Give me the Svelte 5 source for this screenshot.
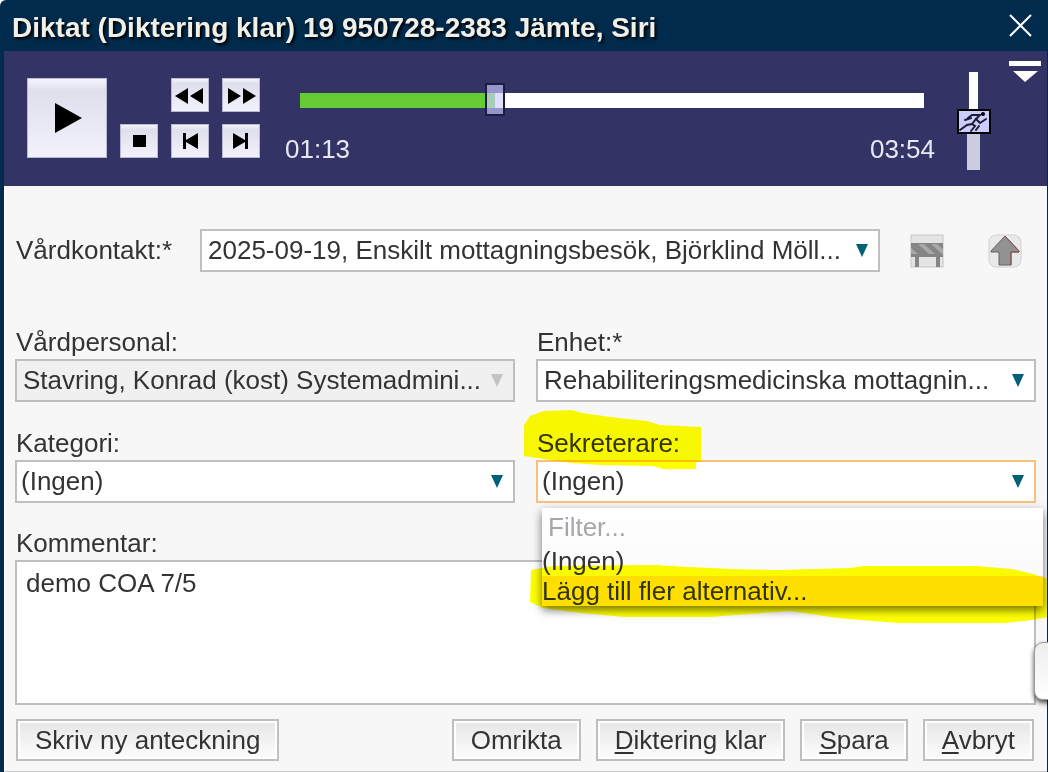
<!-- DictationDialog -->
<script>
  let position = 73;
  let duration = 234;
  let speed = 50;
  let comment = 'demo COA 7/5';
  let filter = '';
  let secretary = '(Ingen)';

  const secretaries = ['(Ingen)', 'Lägg till fler alternativ...'];

  $: progress = (position / duration) * 100;

  function formatTime(seconds) {
    const m = String(Math.floor(seconds / 60)).padStart(2, '0');
    const s = String(seconds % 60).padStart(2, '0');
    return `${m}:${s}`;
  }
</script>

<div class="dialog">
  <header class="titlebar">
    <h1>Diktat (Diktering klar) 19 950728-2383 Jämte, Siri</h1>
    <button class="plain" aria-label="Stäng">
      <svg width="24" height="24" viewBox="0 0 24 24"><path d="M1 1 L22 22 M22 1 L1 22" stroke="#fff" stroke-width="2" /></svg>
    </button>
  </header>

  <section class="player">
    <button class="key play" aria-label="Spela">
      <svg width="78" height="78" viewBox="0 0 78 78"><path d="M27 24 L54 39 L27 54 Z" /></svg>
    </button>
    <div class="keys">
      <button class="key stop" aria-label="Stopp">
        <svg width="36" height="32" viewBox="0 0 36 32"><path d="M12 10 H25 V22 H12 Z" /></svg>
      </button>
      <button class="key rewind" aria-label="Spola bakåt">
        <svg width="36" height="32" viewBox="0 0 36 32"><path d="M3 17 L16 9 V25 Z M18 17 L31 9 V25 Z" /></svg>
      </button>
      <button class="key forward" aria-label="Spola framåt">
        <svg width="36" height="32" viewBox="0 0 36 32"><path d="M5 9 L18 17 L5 25 Z M20 9 L33 17 L20 25 Z" /></svg>
      </button>
      <button class="key first" aria-label="Till början">
        <svg width="36" height="32" viewBox="0 0 36 32"><path d="M11 8 H14 V15 L26 8 V24 L14 17 V24 H11 Z" /></svg>
      </button>
      <button class="key last" aria-label="Till slutet">
        <svg width="36" height="32" viewBox="0 0 36 32"><path d="M10 8 L22 15 V8 H25 V24 H22 V17 L10 24 Z" /></svg>
      </button>
    </div>

    <div class="timeline">
      <div class="track">
        <div class="played" style="width: {progress}%"></div>
        <input type="range" min="0" max={duration} bind:value={position} aria-label="Position" />
      </div>
      <div class="times">
        <span>{formatTime(position)}</span>
        <span>{formatTime(duration)}</span>
      </div>
    </div>

    <div class="speed">
      <svg width="34" height="98" viewBox="0 0 34 98">
        <rect x="12" y="0" width="9" height="40" fill="#fff" />
        <rect x="10" y="60" width="13" height="38" fill="#cccce0" />
        <rect x="1" y="38" width="32" height="23" fill="#ccccff" stroke="#000" stroke-width="2" />
        <g fill="none" stroke="#1d1d30" stroke-width="2" stroke-linecap="round">
          <path d="M3 58 L10 53 L15 52 L19 47 L23 43 L15 43 L11 46" />
          <path d="M8 48 L14 46 M19 47 L23 51 L29 47 M15 52 L18 54 L14 59" />
          <path d="M22 54 L19 58" />
        </g>
        <circle cx="26" cy="42" r="2" />
      </svg>
      <input type="range" min="0" max="100" bind:value={speed} aria-label="Hastighet" />
    </div>

    <button class="plain collapse" aria-label="Fäll ihop">
      <svg width="32" height="22" viewBox="0 0 32 22"><path d="M0 0 H32 V5 H0 Z M4 10 H29 L16 21 Z" fill="#fff" /></svg>
    </button>
  </section>

  <form class="body" on:submit|preventDefault>
    <div class="contact">
      <label for="contact">Vårdkontakt:*</label>
      <div class="select indent">
        <select id="contact"><option>2025-09-19, Enskilt mottagningsbesök, Björklind Möll...</option></select>
      </div>
      <button type="button" class="plain barrier" aria-label="Spärr">
        <svg width="34" height="34" viewBox="0 0 34 34">
          <rect x="1" y="1" width="32" height="32" fill="#e3e4e5" stroke="#c6c6c6" />
          <path d="M5 23 H9 V33 H5 Z M26 23 H30 V33 H26 Z" fill="#858585" />
          <rect x="1" y="9" width="32" height="14" fill="#858585" />
          <path d="M8 10 H14 L25 20 H19 Z M21 10 H27 L33 15 V20 H32 Z M1 14 L8 20 H2 L1 19 Z" fill="#a8a8a8" />
        </svg>
      </button>
      <button type="button" class="plain" aria-label="Hämta">
        <svg width="34" height="34" viewBox="0 0 34 34">
          <rect x="1" y="1" width="32" height="32" rx="7" fill="#e9e9e9" stroke="#d2d2d2" />
          <path d="M17 2 L31 17 V18 H23 V31 H11 V18 H3 V17 Z" fill="#929292" stroke="#6c6060" />
          <path d="M17 2 L31 17 V18 H23 V31" fill="none" stroke="#8c4a50" />
        </svg>
      </button>
    </div>

    <div class="grid">
      <div class="field">
        <label for="staff">Vårdpersonal:</label>
        <div class="select indent disabled">
          <select id="staff" disabled><option>Stavring, Konrad (kost) Systemadmini...</option></select>
        </div>
      </div>
      <div class="field">
        <label for="unit">Enhet:*</label>
        <div class="select indent">
          <select id="unit"><option>Rehabiliteringsmedicinska mottagnin...</option></select>
        </div>
      </div>
      <div class="field">
        <label for="category">Kategori:</label>
        <div class="select">
          <select id="category"><option>(Ingen)</option></select>
        </div>
      </div>
      <div class="field">
        <label for="secretary">Sekreterare:</label>
        <div class="select open">
          <select id="secretary" bind:value={secretary}>
            {#each secretaries as name}
              <option>{name}</option>
            {/each}
          </select>
        </div>
        <div class="popup">
          <input type="text" placeholder="Filter..." aria-label="Filter" bind:value={filter} />
          {#each secretaries as name, i}
            <button type="button" class:active={i === 1} on:click={() => (secretary = name)}>{name}</button>
          {/each}
        </div>
        <svg class="marker" width="526" height="216" viewBox="0 0 526 216" aria-hidden="true">
          <path d="M2 17 L8 8 L22 3 L50 2 L60 5 L96 10 L125 13 L138 17 L179 19 V54 H174 V61 H141 L131 58 L78 57 L50 55 L28 52 L2 48 Z" />
          <path d="M9 162 L31 158 L131 157 L166 159 L210 161 L258 162 L328 160 L342 158 L455 158 L490 161 L511 166 L526 171 V209 L510 212 L483 215 L376 215 L338 212 L316 210 L268 203 L213 207 L189 209 L103 209 L58 205 L21 200 L8 194 Z" />
        </svg>
      </div>
    </div>

    <div class="field comment">
      <label for="comment">Kommentar:</label>
      <textarea id="comment" bind:value={comment}></textarea>
    </div>

    <div class="actions">
      <button type="button">Skriv ny anteckning</button>
      <span class="spacer"></span>
      <button type="button">Omrikta</button>
      <button type="button"><u>D</u>iktering klar</button>
      <button type="button"><u>S</u>para</button>
      <button type="button"><u>A</u>vbryt</button>
    </div>
  </form>

  <div class="tab"></div>
</div>

<style>
  :global(body) {
    background: #fff;
    overflow: hidden;
  }

  .dialog,
  .dialog :is(button, input, select, textarea) {
    font-family: 'Liberation Sans', Arial, sans-serif;
    font-size: 26px;
    color: #333;
    box-sizing: border-box;
  }

  .dialog {
    position: relative;
    overflow: hidden;
    background: #002b4d;
    border-top-left-radius: 6px;
    padding: 0 1px 0 4px;
  }

  svg {
    display: block;
  }

  .plain {
    border: 0;
    padding: 0;
    background: none;
  }

  .titlebar {
    display: flex;
    align-items: center;
    justify-content: space-between;
    height: 51px;
    padding: 0 14px 0 8px;
  }

  h1 {
    margin: 4px 0 0;
    font-size: 28px;
    line-height: 32px;
    font-weight: bold;
    white-space: nowrap;
    color: #f0f0e8;
    text-shadow: 2px 2px 3px #000;
  }

  .player {
    display: flex;
    align-items: flex-start;
    height: 135px;
    box-sizing: border-box;
    padding: 21px 6px 0 23px;
    background: #333366;
  }

  .key {
    padding: 0;
    border: 1px solid #b9b9d2;
    background: linear-gradient(#f4f4fc, #dfdfec 15%, #f2f2fb);
  }

  .play {
    margin-top: 6px;
  }

  .keys {
    display: grid;
    grid-template-columns: repeat(3, 38px);
    gap: 12px 13px;
    margin: 6px 0 0 13px;
  }

  .stop {
    grid-area: 2 / 1;
  }

  .rewind {
    grid-area: 1 / 2;
  }

  .forward {
    grid-area: 1 / 3;
  }

  .first {
    grid-area: 2 / 2;
  }

  .last {
    grid-area: 2 / 3;
  }

  .timeline {
    flex: 1;
    margin: 21px 0 0 40px;
  }

  .track {
    position: relative;
    height: 15px;
    background: #fff;
  }

  .played {
    height: 100%;
    background: #66cc33;
  }

  .track input {
    position: absolute;
    inset: -11px -10px -9px;
    width: calc(100% + 20px);
    margin: 0;
    appearance: none;
    background: none;
  }

  .track input::-webkit-slider-thumb {
    appearance: none;
    width: 20px;
    height: 33px;
    border: 2px solid #1c1c40;
    background: rgba(204, 204, 255, 0.65);
  }

  .times {
    display: flex;
    justify-content: space-between;
    margin: 26px -11px 0 -15px;
    line-height: 30px;
    color: #e8e8f4;
  }

  .speed {
    position: relative;
    margin: 0 0 0 33px;
  }

  .speed input {
    position: absolute;
    inset: 0;
    width: 100%;
    height: 100%;
    margin: 0;
    opacity: 0;
    writing-mode: vertical-lr;
  }

  .collapse {
    margin: -11px 0 0 18px;
  }

  .body {
    padding: 43px 11px 10px 10px;
    background: #f7f7f7;
    border-left: 1px solid #fff;
    border-bottom: 1px solid #c4c8cc;
  }

  .contact {
    display: flex;
    align-items: center;
  }

  .contact label {
    width: 185px;
    box-sizing: border-box;
    padding-left: 1px;
  }

  .contact .select {
    flex: 1;
    margin-right: 30px;
  }

  .barrier {
    margin-right: 44px;
  }

  .contact .plain:last-child {
    margin-right: 14px;
  }

  .grid {
    display: grid;
    grid-template-columns: 1fr 1fr;
    gap: 24px 21px;
    margin-top: 53px;
  }

  .field {
    position: relative;
    min-width: 0;
  }

  .field label {
    display: block;
    padding-left: 1px;
    line-height: 34px;
  }

  .select {
    position: relative;
    min-width: 0;
  }

  .select::after {
    content: '';
    position: absolute;
    top: 15px;
    right: 12px;
    border: solid transparent;
    border-width: 13px 6px 0;
    border-top-color: #006078;
    pointer-events: none;
  }

  .disabled::after {
    border-top-color: #c4c4c8;
  }

  .select select {
    display: block;
    width: 100%;
    height: 43px;
    padding: 0 28px 2px 4px;
    border: 2px solid #bfbfbf;
    border-radius: 0;
    appearance: none;
    background: #fff;
    opacity: 1;
  }

  .select.indent select {
    padding-left: 6px;
  }

  .select.disabled select {
    background: #f0f0f1;
  }

  .select.open select {
    border-color: #f9bf7c;
  }

  .popup {
    position: absolute;
    z-index: 1;
    top: 82px;
    left: 6px;
    right: -7px;
    display: flex;
    flex-direction: column;
    background: linear-gradient(#fff, #f8f8f8);
    box-shadow: 0 4px 9px rgba(0, 0, 0, 0.55);
  }

  .popup input {
    height: 38px;
    padding: 0 6px;
    border: 0;
    background: none;
  }

  .popup input::placeholder {
    color: #a6a6ac;
  }

  .popup button {
    height: 30px;
    padding: 0;
    border: 0;
    background: none;
    line-height: 30px;
    text-align: left;
  }

  .popup .active {
    background: #ffdf9c;
  }

  .marker {
    position: absolute;
    z-index: 2;
    top: -18px;
    left: -14px;
    fill: #ffff00;
    mix-blend-mode: multiply;
    pointer-events: none;
  }

  .comment {
    margin-top: 23px;
  }

  textarea {
    display: block;
    width: 100%;
    height: 145px;
    padding: 6px 9px;
    border: 2px solid #bfbfbf;
    border-radius: 0;
    resize: none;
    line-height: 30px;
    background: #fff;
  }

  .actions {
    display: flex;
    gap: 15px;
    margin: 14px 2px 0 1px;
  }

  .spacer {
    flex: 1;
  }

  .actions button {
    height: 42px;
    padding: 0 17px;
    border: 2px solid #bfbfbf;
    background: linear-gradient(#e6e6e8, #fdfdfd);
    box-shadow: inset 0 0 0 2px #fff;
    white-space: nowrap;
  }

  u {
    text-underline-offset: 3px;
  }

  .tab {
    position: absolute;
    z-index: 3;
    right: -20px;
    bottom: 72px;
    width: 34px;
    height: 58px;
    border: 1px solid #999;
    border-radius: 9px;
    box-sizing: border-box;
    background: linear-gradient(#eee, #fff);
    box-shadow: 0 3px 5px rgba(0, 0, 0, 0.7);
  }
</style>
